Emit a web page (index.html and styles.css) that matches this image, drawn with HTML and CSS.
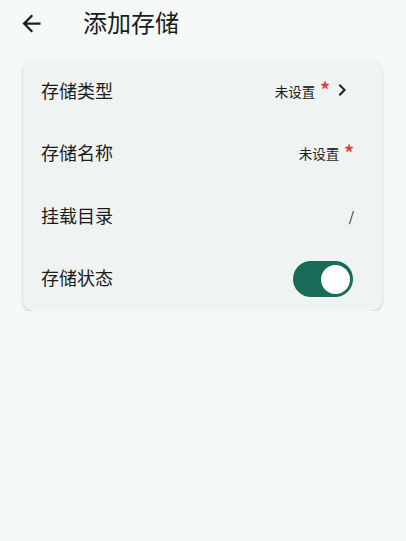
FILE: index.html
```html
<!DOCTYPE html>
<html lang="zh">
<head>
    <meta charset="UTF-8">
    <meta name="viewport" content="width=device-width, initial-scale=1.0">
    <title>添加存储</title>
    <link rel="stylesheet" href="styles.css">
</head>
<body>
    <header class="topbar">
        <button class="back" aria-label="返回">
            <svg width="27" height="27" viewBox="0 0 24 24"><path d="M20 11H7.83l5.59-5.59L12 4l-8 8 8 8 1.41-1.41L7.83 13H20v-2z" fill="#1b1c1c"/></svg>
        </button>
        <h1 class="title">添加存储</h1>
    </header>

    <div class="card">
        <div class="row">
            <span class="label">存储类型</span>
            <span class="value">未设置<span class="req">*</span>
                <svg class="chev" width="24" height="24" viewBox="0 0 24 24"><path d="M8.59 16.59 13.17 12 8.59 7.41 10 6l6 6-6 6-1.41-1.41z" fill="#1b1c1c"/></svg>
            </span>
        </div>
        <div class="row">
            <span class="label">存储名称</span>
            <span class="value">未设置<span class="req">*</span></span>
        </div>
        <div class="row">
            <span class="label">挂载目录</span>
            <span class="value slash">/</span>
        </div>
        <div class="row">
            <span class="label">存储状态</span>
            <span class="switch"><span class="thumb"></span></span>
        </div>
    </div>
</body>
</html>
```

FILE: styles.css
```css
body {
    margin: 0;
    background: #f5f9f7;
    font-family: "Noto Sans CJK SC", "Noto Sans", sans-serif;
    color: #1b1c1c;
}
.topbar {
    display: flex;
    align-items: center;
    height: 44px;
    padding: 2px 0 0 18px;
    box-sizing: border-box;
}
.back {
    border: none;
    background: none;
    padding: 0;
    width: 27px;
    height: 27px;
    display: flex;
}
.title {
    margin: -3px 0 0 38px;
    font-size: 24px;
    font-weight: 400;
    line-height: 1;
}
.card {
    margin: 17px 24px 0 23px;
    background: #eff3f1;
    border-radius: 10px;
    box-shadow: 0 1px 3px rgba(0, 0, 0, 0.22);
}
.row {
    display: flex;
    align-items: center;
    justify-content: space-between;
    height: 62.5px;
    padding: 0 28px 5px 18px;
    box-sizing: border-box;
}
.label {
    font-size: 18px;
}
.value {
    display: flex;
    align-items: center;
    font-size: 13.5px;
    padding-top: 2px;
}
.req {
    color: #d9403a;
    font-size: 19px;
    font-weight: 700;
    line-height: 1;
    margin-left: 5px;
    position: relative;
    top: -2px;
}
.chev {
    margin-left: 0;
    margin-top: -2px;
}
.switch {
    width: 60px;
    height: 36px;
    margin: 4px 1px 0 0;
    border-radius: 18px;
    background: #176b57;
    display: flex;
    align-items: center;
    justify-content: flex-end;
    padding-right: 3px;
    box-sizing: border-box;
}
.thumb {
    width: 29px;
    height: 29px;
    border-radius: 50%;
    background: #fff;
}
```
